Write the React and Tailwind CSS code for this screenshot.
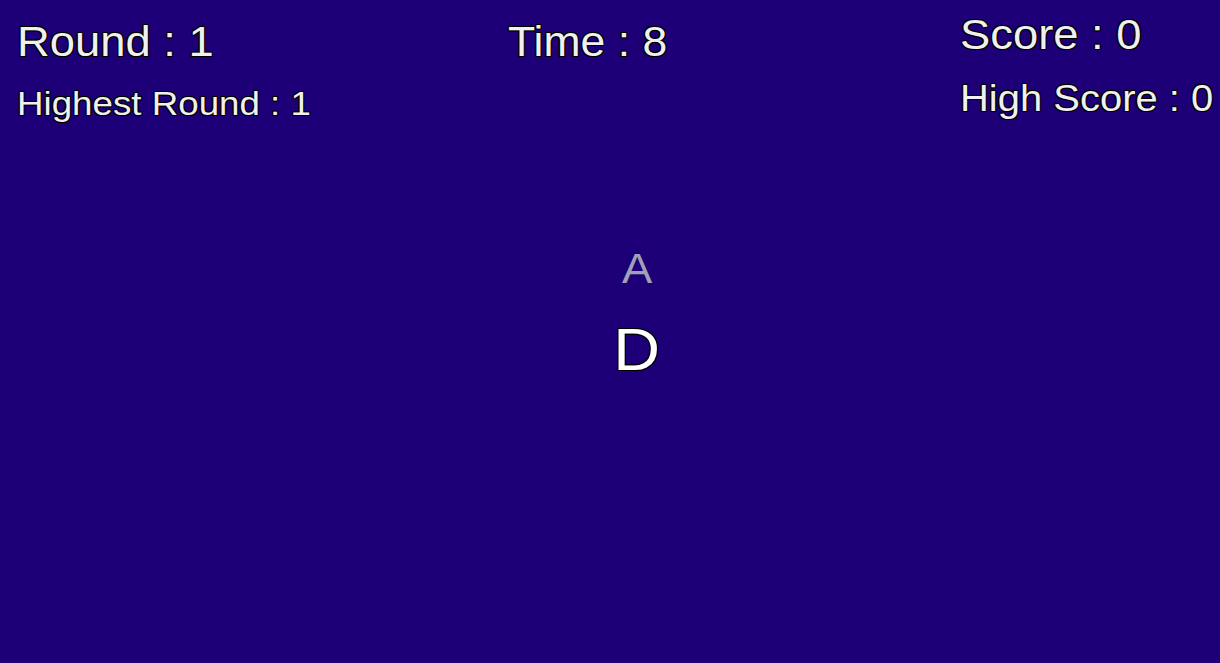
export default function App() {
  const outline =
    "[text-shadow:1px_0_0_#000,-1px_0_0_#000,0_1px_0_#000,0_-1px_0_#000,1px_1px_0_#000,-1px_-1px_0_#000,1px_-1px_0_#000,-1px_1px_0_#000]";
  return (
    <div
      className="w-[1220px] h-[663px] bg-[#1d0077] overflow-hidden text-[#f0f0f0] flex flex-col"
      style={{ fontFamily: '"Liberation Sans", Arial, sans-serif' }}
    >
      <div className="flex items-start h-[121px]">
        <div className="w-[508px] pl-[17px] pt-[21px]">
          <div className={`text-[42px] leading-none whitespace-nowrap origin-left scale-x-[1.08] ${outline}`}>Round : 1</div>
          <div className={`mt-[23px] text-[34px] leading-none whitespace-nowrap origin-left scale-x-[1.08] ${outline}`}>Highest Round : 1</div>
        </div>
        <div className="w-[452px] pt-[21px]">
          <div className={`text-[42px] leading-none whitespace-nowrap origin-left scale-x-[1.06] ${outline}`}>Time : 8</div>
        </div>
        <div className="flex-1 pt-[14px]">
          <div className={`text-[42px] leading-none whitespace-nowrap origin-left scale-x-[1.08] ${outline}`}>Score : 0</div>
          <div className={`mt-[24px] text-[37px] leading-none whitespace-nowrap origin-left scale-x-[1.08] ${outline}`}>High Score : 0</div>
        </div>
      </div>
      <div className="flex flex-col items-center pl-[54px] mt-[127px]">
        <div className="text-[42px] leading-none scale-x-[1.08] text-[#a0a0b6]">A</div>
        <div className={`mt-[30px] text-[60px] leading-none scale-x-[1.08] text-white ${outline}`}>D</div>
      </div>
    </div>
  );
}
